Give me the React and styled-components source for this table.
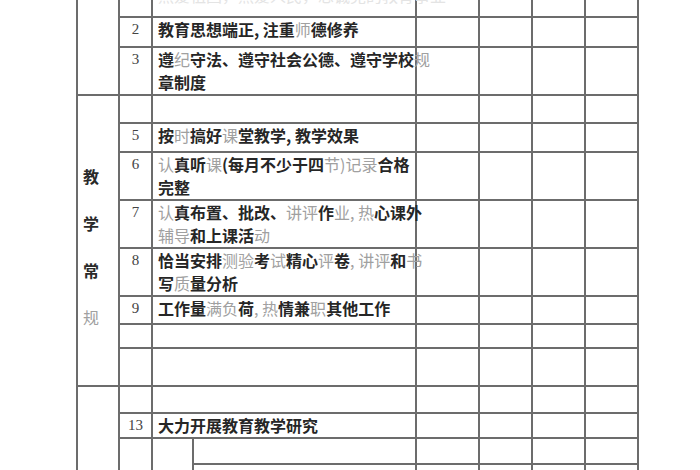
import React from "react";
import styled, { createGlobalStyle } from "styled-components";

const GlobalStyle = createGlobalStyle`
  html, body {
    margin: 0;
    padding: 0;
    background: #ffffff;
    overflow: hidden;
  }
`;

const Page = styled.div`
  width: 700px;
  height: 470px;
  overflow: hidden;
  padding-left: 76px;
  box-sizing: border-box;
`;

const Sheet = styled.table`
  margin-top: -14px;
  border-collapse: collapse;
  table-layout: fixed;
  width: 561px;
  font-family: "Noto Sans CJK SC", "Noto Sans", sans-serif;
  font-size: 16px;
  color: #1c1c1c;
`;

const Row = styled.tr`
  height: ${({ $h }) => $h}px;
`;

const Cell = styled.td`
  border: 2px solid #6c6c6c;
  padding: 0;
  vertical-align: top;
`;

const CatCell = styled(Cell)`
  padding: ${({ $top }) => $top || 0}px 0 0 5px;
  line-height: 47px;
  font-weight: 700;
  color: #2a2a2a;
`;

const NumCell = styled(Cell)`
  text-align: center;
  font-family: "Liberation Serif", "DejaVu Serif", serif;
  font-size: 15px;
  line-height: ${({ $ghost }) => ($ghost ? 15 : 23)}px;
  color: ${({ $ghost }) => ($ghost ? "#e2e2e2" : "#444")};
`;

const TextCell = styled(Cell)`
  padding: 0 0 0 5px;
  line-height: ${({ $ghost }) => ($ghost ? 15 : 23)}px;
  white-space: nowrap;
  font-weight: ${({ $ghost }) => ($ghost ? 400 : 700)};
  color: ${({ $ghost }) => ($ghost ? "#e4e4e4" : "#262626")};
`;

const Faint = styled.span`
  color: #a0a0a0;
  font-weight: 400;
`;

// {..} marks the lighter (washed-out) characters of the scan
const Ink = ({ text }) =>
  text.split(/(\{[^}]*\})/).map((part, i) =>
    part.startsWith("{") ? <Faint key={i}>{part.slice(1, -1)}</Faint> : <span key={i}>{part}</span>
  );

const Empties = () => (
  <>
    <Cell />
    <Cell />
    <Cell />
    <Cell />
  </>
);

const rows = [
  { h: 30, no: "1", ghost: true, lines: ["热爱祖国，热爱人民，忠诚党的教育事业"], cat: { span: 3, top: 0, label: [] } },
  { h: 30, no: "2", lines: ["教育思想端正, 注重{师}德修养"] },
  { h: 48, no: "3", lines: ["遵{纪}守法、遵守社会公德、遵守学校{规}", "章制度"] },
  { h: 28, no: "", lines: [], cat: { span: 8, top: 57, label: ["教", "学", "常", "{规}"] } },
  { h: 29, no: "5", lines: ["按{时}搞好{课}堂教学, 教学效果"] },
  { h: 47, no: "6", lines: ["{认}真听{课}(每月不少于四{节)记录}合格", "完整"] },
  { h: 47, no: "7", lines: ["{认}真布置、批改、{讲评}作{业, 热}心课外", "{辅导}和上课活{动}"] },
  { h: 48, no: "8", lines: ["恰当安排{测验}考{试}精心{评}卷{, 讲评}和{书}", "写{质}量分析"] },
  { h: 28, no: "9", lines: ["工作量{满负}荷{, 热}情兼{职}其他工作"] },
  { h: 24, no: "", lines: [] },
  { h: 38, no: "", lines: [] },
];

export default function App() {
  return (
    <Page>
      <GlobalStyle />
      <Sheet>
        <colgroup>
          <col style={{ width: 42 }} />
          <col style={{ width: 33 }} />
          <col style={{ width: 41 }} />
          <col style={{ width: 223 }} />
          <col style={{ width: 63 }} />
          <col style={{ width: 53 }} />
          <col style={{ width: 53 }} />
          <col style={{ width: 53 }} />
        </colgroup>
        <tbody>
          {rows.map((r, i) => (
            <Row key={i} $h={r.h}>
              {r.cat && (
                <CatCell rowSpan={r.cat.span} $top={r.cat.top}>
                  {r.cat.label.map((c, j) => (
                    <div key={j}>
                      <Ink text={c} />
                    </div>
                  ))}
                </CatCell>
              )}
              <NumCell $ghost={r.ghost}>{r.no}</NumCell>
              <TextCell colSpan={2} $ghost={r.ghost}>
                {r.lines.map((l, j) => (
                  <div key={j}>
                    <Ink text={l} />
                  </div>
                ))}
              </TextCell>
              <Empties />
            </Row>
          ))}

          <Row $h={27}>
            <CatCell rowSpan={4} />
            <NumCell />
            <TextCell colSpan={2} />
            <Empties />
          </Row>
          <Row $h={25}>
            <NumCell>13</NumCell>
            <TextCell colSpan={2}>大力开展教育教学研究</TextCell>
            <Empties />
          </Row>
          <Row $h={26}>
            <NumCell rowSpan={2} />
            <TextCell rowSpan={2} />
            <TextCell />
            <Empties />
          </Row>
          <Row $h={28}>
            <TextCell />
            <Empties />
          </Row>
        </tbody>
      </Sheet>
    </Page>
  );
}
